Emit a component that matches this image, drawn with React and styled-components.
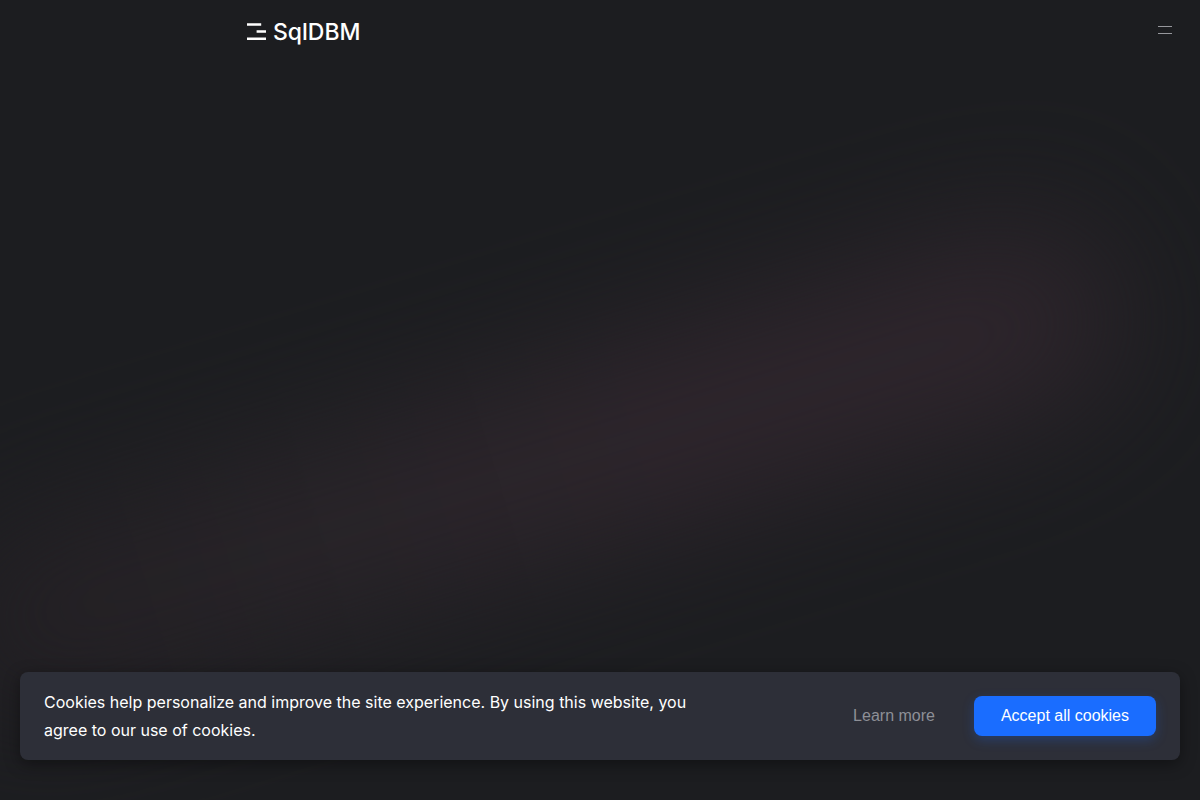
import React from "react";
import styled, { createGlobalStyle } from "styled-components";

const GlobalStyle = createGlobalStyle`
  * {
    box-sizing: border-box;
  }

  body {
    margin: 0;
    background: #1c1d20;
    color: #fff;
    font-family: "Inter", sans-serif;
  }
`;

const Page = styled.div`
  position: relative;
  display: flex;
  flex-direction: column;
  justify-content: space-between;
  min-height: 100vh;
  overflow: hidden;
`;

// soft diagonal light behind everything
const Glow = styled.div`
  position: absolute;
  top: 47%;
  left: -7%;
  width: 102%;
  height: 190px;
  border-radius: 100px;
  background: linear-gradient(90deg, #221f23, #292429 35%, #2e252c 60%, #2e252c);
  filter: blur(64px);
  transform: rotate(-17deg);
  pointer-events: none;
`;

const Header = styled.header`
  position: relative;
  display: flex;
  align-items: center;
  justify-content: space-between;
  height: 60px;
  padding: 0 20px 0 247px;
`;

const Logo = styled.a`
  display: flex;
  align-items: center;
  gap: 6px;
  padding-top: 4px;
  color: #fff;
  font-size: 23px;
  line-height: 32px;
  font-weight: 500;
  text-decoration: none;
`;

const MenuButton = styled.button`
  display: flex;
  flex-direction: column;
  gap: 6px;
  padding: 8px;
  border: 0;
  background: none;
  cursor: pointer;

  span {
    width: 14px;
    height: 1px;
    background: #96979c;
  }
`;

const CookieBar = styled.section`
  position: relative;
  display: flex;
  align-items: center;
  justify-content: space-between;
  gap: 24px;
  margin: 0 20px 40px;
  padding: 16px 24px;
  border-radius: 8px;
  background: #2d2f38;
  box-shadow: 0 4px 16px rgba(0, 0, 0, 0.4);

  p {
    max-width: 660px;
    margin: 0;
    font-size: 16px;
    line-height: 28px;
  }
`;

const Actions = styled.div`
  display: flex;
  align-items: center;
  flex-shrink: 0;
  gap: 12px;
`;

const Button = styled.button`
  height: 40px;
  padding: 0 27px;
  border: 0;
  border-radius: 8px;
  background: ${(props) => (props.$primary ? "#1a6dff" : "none")};
  box-shadow: ${(props) =>
    props.$primary ? "0 4px 12px rgba(26, 109, 255, 0.25)" : "none"};
  color: ${(props) => (props.$primary ? "#fff" : "#8e9097")};
  font-family: "Liberation Sans", Arial, sans-serif;
  font-size: 16px;
  white-space: nowrap;
  cursor: pointer;
`;

const App = () => {
  return (
    <Page>
      <GlobalStyle />
      <Glow />
      <Header>
        <Logo href="/">
          <svg width="20" height="18" viewBox="0 0 20 18" fill="#fff" aria-hidden="true">
            <path d="M0 0.3h14.2v2.4H0zM9.6 7.3H19v2.4H9.6zM0 14.6h19V17H0z" />
          </svg>
          SqlDBM
        </Logo>
        <MenuButton type="button" aria-label="Open menu">
          <span />
          <span />
        </MenuButton>
      </Header>
      <CookieBar aria-label="Cookies">
        <p>
          Cookies help personalize and improve the site experience. By using
          this website, you agree to our use of cookies.
        </p>
        <Actions>
          <Button type="button">Learn more</Button>
          <Button type="button" $primary>
            Accept all cookies
          </Button>
        </Actions>
      </CookieBar>
    </Page>
  );
};

export default App;
